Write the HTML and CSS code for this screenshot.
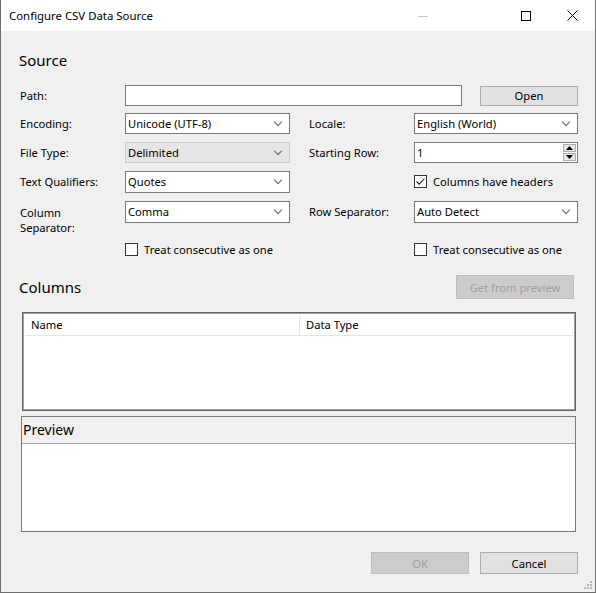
FILE: index.html
```html
<!DOCTYPE html>
<html lang="en">
<head>
  <meta charset="UTF-8">
  <title>Configure CSV Data Source</title>
  <link rel="stylesheet" href="styles.css">
</head>
<body>

<div class="window">
  <div class="titlebar">
    <span class="title">Configure CSV Data Source</span>
    <div class="controls">
      <span class="ctl min"><svg width="10" height="10" viewBox="0 0 10 10"><path d="M0 5.5H10" stroke="#c8c8c8" stroke-width="1"/></svg></span>
      <span class="ctl max"><svg width="10" height="10" viewBox="0 0 10 10"><rect x="0.5" y="0.5" width="9" height="9" fill="none" stroke="#000" stroke-width="1"/></svg></span>
      <span class="ctl close"><svg width="11" height="11" viewBox="0 0 11 11"><path d="M0.5 0.5L10.5 10.5M10.5 0.5L0.5 10.5" stroke="#000" stroke-width="1"/></svg></span>
    </div>
  </div>

  <div class="content">
    <h2 class="section">Source</h2>

    <div class="path-row">
      <label class="lbl">Path:</label>
      <div class="input path"></div>
      <button class="btn open">Open</button>
    </div>

    <div class="form">
      <label class="lbl">Encoding:</label>
      <div class="select">Unicode (UTF-8)</div>
      <label class="lbl">Locale:</label>
      <div class="select">English (World)</div>

      <label class="lbl">File Type:</label>
      <div class="select disabled">Delimited</div>
      <label class="lbl">Starting Row:</label>
      <div class="spinner">
        <span>1</span>
        <div class="spin-btns">
          <span class="spin"><svg width="7" height="4" viewBox="0 0 7 4"><path d="M0 4L3.5 0L7 4Z" fill="#000"/></svg></span>
          <span class="spin"><svg width="7" height="4" viewBox="0 0 7 4"><path d="M0 0L3.5 4L7 0Z" fill="#000"/></svg></span>
        </div>
      </div>

      <label class="lbl">Text Qualifiers:</label>
      <div class="select">Quotes</div>
      <span></span>
      <label class="check"><span class="box"><svg width="11" height="11" viewBox="0 0 11 11"><path d="M1.5 5.5L4.2 8.2L9.5 2.5" fill="none" stroke="#222" stroke-width="1.1"/></svg></span>Columns have headers</label>

      <label class="lbl two-line">Column<br>Separator:</label>
      <div class="select">Comma</div>
      <label class="lbl">Row Separator:</label>
      <div class="select">Auto Detect</div>

      <span></span>
      <label class="check"><span class="box"></span>Treat consecutive as one</label>
      <span></span>
      <label class="check"><span class="box"></span>Treat consecutive as one</label>
    </div>

    <div class="columns-head">
      <h2 class="section">Columns</h2>
      <button class="btn disabled get">Get from preview</button>
    </div>

    <div class="list">
      <div class="list-head">
        <span class="col name">Name</span>
        <span class="col">Data Type</span>
      </div>
    </div>

    <div class="preview">
      <div class="preview-head">Preview</div>
      <div class="preview-body"></div>
    </div>

    <div class="footer">
      <button class="btn disabled">OK</button>
      <button class="btn">Cancel</button>
    </div>
  </div>

  <svg class="grip" width="10" height="10" viewBox="0 0 10 10">
    <rect x="7" y="1" width="2" height="2" fill="#b8b8b8"/>
    <rect x="4" y="4" width="2" height="2" fill="#b8b8b8"/>
    <rect x="7" y="4" width="2" height="2" fill="#b8b8b8"/>
    <rect x="1" y="7" width="2" height="2" fill="#b8b8b8"/>
    <rect x="4" y="7" width="2" height="2" fill="#b8b8b8"/>
    <rect x="7" y="7" width="2" height="2" fill="#b8b8b8"/>
  </svg>
</div>

</body>
</html>
```

FILE: styles.css
```css
body {
  margin: 0;
  font-family: "Noto Sans", "Open Sans", sans-serif;
  font-size: 11.2px;
  color: #000;
  background-color: #f0f0f0;
}

.window {
  position: relative;
  width: 596px;
  height: 593px;
  box-sizing: border-box;
  border: 1px solid #707070;
  border-top: none;
  background-color: #f0f0f0;
  overflow: hidden;
}

.titlebar {
  height: 31px;
  background-color: #fff;
  display: flex;
  align-items: center;
  justify-content: space-between;
}

.title {
  padding-left: 8px;
  font-size: 11.4px;
}

.controls {
  display: flex;
  height: 31px;
}

.ctl {
  width: 46px;
  display: flex;
  align-items: center;
  justify-content: center;
}

.ctl.min { margin-right: 57px; }

.content {
  padding: 0 17px 0 19px;
}

.section {
  margin: 0;
  font-size: 15px;
  font-weight: normal;
  height: 22px;
  line-height: 22px;
}

.content > .section {
  margin-top: 18px;
  margin-left: -1px;
}

.lbl {
  display: flex;
  align-items: center;
  height: 21px;
}

.lbl.two-line {
  display: block;
  line-height: 15px;
  padding-top: 4px;
  height: 22px;
  box-sizing: border-box;
}

.path-row {
  display: grid;
  grid-template-columns: 105px 337px 116px;
  margin-top: 14px;
  align-items: center;
}

.input, .select, .spinner {
  box-sizing: border-box;
  height: 21px;
  background-color: #fff;
  border: 1px solid #7a7a7a;
}

.btn.open {
  margin-left: 18px;
  height: 20px;
}

.select {
  position: relative;
  padding-left: 2px;
  line-height: 19px;
}

.select::after {
  content: "";
  position: absolute;
  right: 8px;
  top: 5px;
  width: 5px;
  height: 5px;
  border-right: 1px solid #606060;
  border-bottom: 1px solid #606060;
  transform: rotate(45deg);
}

.select.disabled {
  background-color: #e5e5e5;
  border-color: #ccc;
}

.spinner {
  display: flex;
  justify-content: space-between;
  padding-left: 2px;
  line-height: 19px;
}

.spin-btns {
  display: flex;
  flex-direction: column;
  gap: 1px;
  padding: 1px;
}

.spin {
  width: 13px;
  height: 8px;
  box-sizing: border-box;
  background-color: #e8e8e8;
  border: 1px solid #adadad;
  display: flex;
  align-items: center;
  justify-content: center;
}

.form {
  display: grid;
  grid-template-columns: 105px 165px 124px 164px;
  grid-template-rows: 21px 21px 22px 22px 21px;
  row-gap: 8px;
  margin-top: 7px;
}

.form > :nth-child(4n+3) {
  margin-left: 19px;
}

.form > .select, .form > .spinner {
  height: 100%;
}

.check {
  display: flex;
  align-items: center;
  height: 21px;
}

.form .check:nth-last-child(-n+3) {
  margin-top: 8px;
}

.box {
  width: 13px;
  height: 13px;
  box-sizing: border-box;
  border: 1px solid #333;
  background-color: #fff;
  margin-right: 6px;
  display: flex;
  align-items: center;
  justify-content: center;
}

.btn {
  font-family: inherit;
  font-size: 11.2px;
  height: 21px;
  padding: 0;
  background-color: #e1e1e1;
  border: 1px solid #adadad;
  color: #000;
}

.btn.disabled {
  background-color: #cccccc;
  border-color: #bfbfbf;
  color: #a0a0a0;
}

.columns-head {
  display: flex;
  justify-content: space-between;
  align-items: center;
  margin-top: 23px;
  padding-right: 4px;
}

.columns-head .section {
  margin-left: -1px;
}

.btn.get {
  width: 118px;
  height: 24px;
}

.list {
  margin: 13px 2px 0 2px;
  height: 99px;
  box-sizing: border-box;
  border: 1px solid #646464;
  box-shadow: inset 0 0 0 1px #a0a0a0;
  background-color: #fff;
  padding: 2px;
}

.list-head {
  display: flex;
  height: 20px;
  border-bottom: 1px solid #e5e5e5;
}

.col {
  padding-left: 6px;
  line-height: 20px;
}

.col.name {
  width: 268px;
  border-right: 1px solid #e5e5e5;
}

.preview {
  margin: 5px 2px 0 1px;
  height: 116px;
  box-sizing: border-box;
  border: 1px solid #7a7a7a;
  display: flex;
  flex-direction: column;
}

.preview-head {
  height: 26px;
  line-height: 26px;
  padding-left: 1px;
  font-size: 14px;
  border-bottom: 1px solid #a0a0a0;
}

.preview-body {
  flex: 1;
  background-color: #fff;
}

.footer {
  display: flex;
  justify-content: flex-end;
  gap: 11px;
  margin-top: 20px;
}

.footer .btn {
  width: 98px;
  height: 22px;
}

.grip {
  position: absolute;
  right: 2px;
  bottom: 2px;
}
```
